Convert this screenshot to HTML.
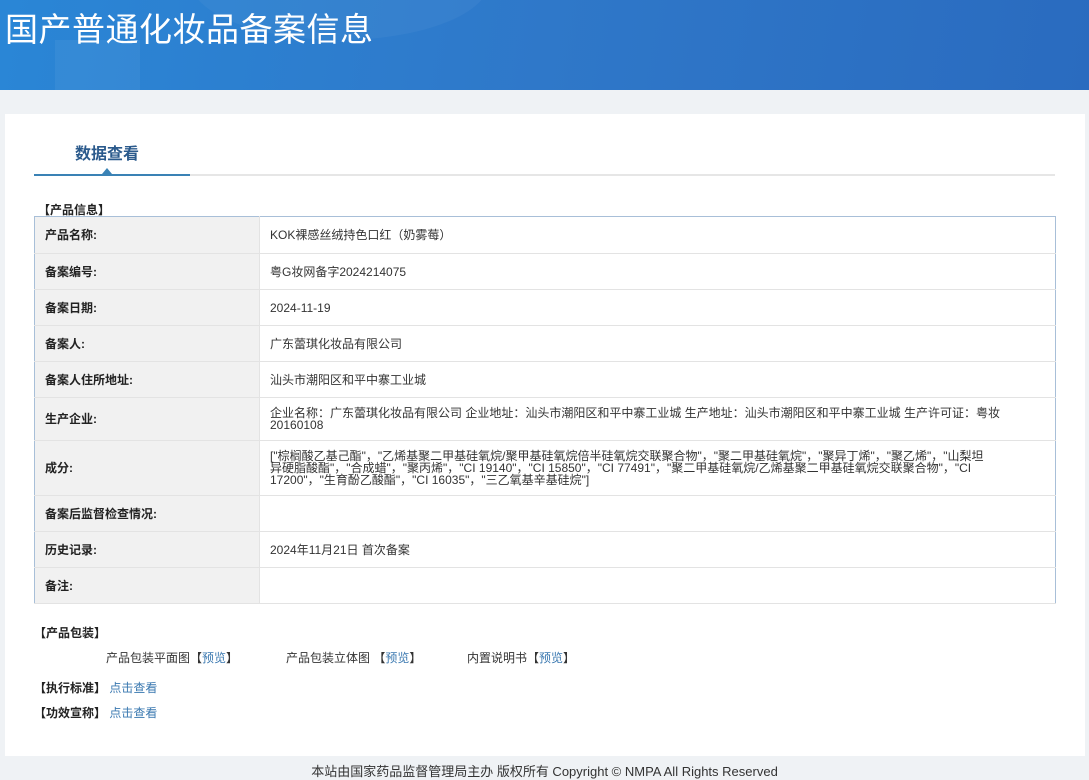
<!DOCTYPE html>
<html><head><meta charset="utf-8"><style>
*{margin:0;padding:0;box-sizing:border-box}
body{width:1089px;height:779px;background:#eff2f5;font-family:"Liberation Sans","Noto Sans CJK SC",sans-serif;font-size:12px;color:#333;position:relative;overflow:hidden}
.hd{position:absolute;left:0;top:0;width:1089px;height:90px;background:linear-gradient(100deg,#2a86d6 0%,#2f78c9 50%,#2a6bbf 100%);overflow:hidden}
.hd .c1{position:absolute;left:55px;top:40px;width:85px;height:60px;background:rgba(255,255,255,.05)}
.hd .c2{position:absolute;left:190px;top:-80px;width:300px;height:120px;border-radius:50%;background:rgba(255,255,255,.04)}
.hd h1{position:absolute;left:5px;top:3px;font-size:33px;font-weight:normal;color:#fff;letter-spacing:0.5px;font-family:"Noto Sans CJK SC",sans-serif}
.card{position:absolute;left:5px;top:114px;width:1080px;height:642px;background:#fff}
.tab{position:absolute;left:75px;top:140px;font-size:16px;font-weight:bold;color:#2b5a8c}
.line{position:absolute;left:34px;top:174px;width:1021px;height:2px;background:#e6e6e6}
.line b{position:absolute;left:0;top:0;width:156px;height:2px;background:#3a82b5}
.tri{position:absolute;left:102px;top:168px;width:0;height:0;border-left:5px solid transparent;border-right:5px solid transparent;border-bottom:6px solid #3a82b5}
.sec{position:absolute;font-weight:bold;color:#222;font-size:12px}
table{position:absolute;left:34px;top:216px;width:1022px;border-collapse:collapse;border:1px solid #a8bfd8}
td{border-bottom:1px solid #e3e3e3;padding:0 10px;vertical-align:middle;line-height:12px}
td.l{width:225px;background:#f1f1f1;font-weight:bold;color:#222;font-size:12px;border-right:1px solid #e3e3e3}
td.v{color:#333;font-size:12px}
.a{color:#3a78b0}
.ft{position:absolute;left:0;top:761px;width:1089px;text-align:center;font-size:13px;color:#333}
</style></head><body>
<div class="hd"><div class="c1"></div><div class="c2"></div><h1>国产普通化妆品备案信息</h1></div>
<div class="card"></div>
<div class="tab">数据查看</div>
<div class="line"><b></b></div><div class="tri"></div>
<div class="sec" style="left:38px;top:201px">【产品信息】</div>
<table>
<tr style="height:37px"><td class="l">产品名称:</td><td class="v">KOK裸感丝绒持色口红（奶雾莓）</td></tr>
<tr style="height:36px"><td class="l">备案编号:</td><td class="v">粤G妆网备字2024214075</td></tr>
<tr style="height:36px"><td class="l">备案日期:</td><td class="v">2024-11-19</td></tr>
<tr style="height:36px"><td class="l">备案人:</td><td class="v">广东蕾琪化妆品有限公司</td></tr>
<tr style="height:36px"><td class="l">备案人住所地址:</td><td class="v">汕头市潮阳区和平中寨工业城</td></tr>
<tr style="height:43px"><td class="l">生产企业:</td><td class="v">企业名称：广东蕾琪化妆品有限公司 企业地址：汕头市潮阳区和平中寨工业城 生产地址：汕头市潮阳区和平中寨工业城 生产许可证：粤妆<br>20160108</td></tr>
<tr style="height:55px"><td class="l">成分:</td><td class="v">["棕榈酸乙基己酯"，"乙烯基聚二甲基硅氧烷/聚甲基硅氧烷倍半硅氧烷交联聚合物"，"聚二甲基硅氧烷"，"聚异丁烯"，"聚乙烯"，"山梨坦<br>异硬脂酸酯"，"合成蜡"，"聚丙烯"，"CI 19140"，"CI 15850"，"CI 77491"，"聚二甲基硅氧烷/乙烯基聚二甲基硅氧烷交联聚合物"，"CI<br>17200"，"生育酚乙酸酯"，"CI 16035"，"三乙氧基辛基硅烷"]</td></tr>
<tr style="height:36px"><td class="l">备案后监督检查情况:</td><td class="v"></td></tr>
<tr style="height:36px"><td class="l">历史记录:</td><td class="v">2024年11月21日 首次备案</td></tr>
<tr style="height:36px"><td class="l">备注:</td><td class="v"></td></tr>
</table>
<div class="sec" style="left:34px;top:624px">【产品包装】</div>
<div style="position:absolute;left:106px;top:649px">产品包装平面图【<span class="a">预览</span>】</div>
<div style="position:absolute;left:286px;top:649px">产品包装立体图 【<span class="a">预览</span>】</div>
<div style="position:absolute;left:467px;top:649px">内置说明书【<span class="a">预览</span>】</div>
<div class="sec" style="left:34px;top:679px">【执行标准】 <span class="a" style="font-weight:normal">点击查看</span></div>
<div class="sec" style="left:34px;top:704px">【功效宣称】 <span class="a" style="font-weight:normal">点击查看</span></div>
<div class="ft">本站由国家药品监督管理局主办 版权所有 Copyright © NMPA All Rights Reserved</div>
</body></html>
